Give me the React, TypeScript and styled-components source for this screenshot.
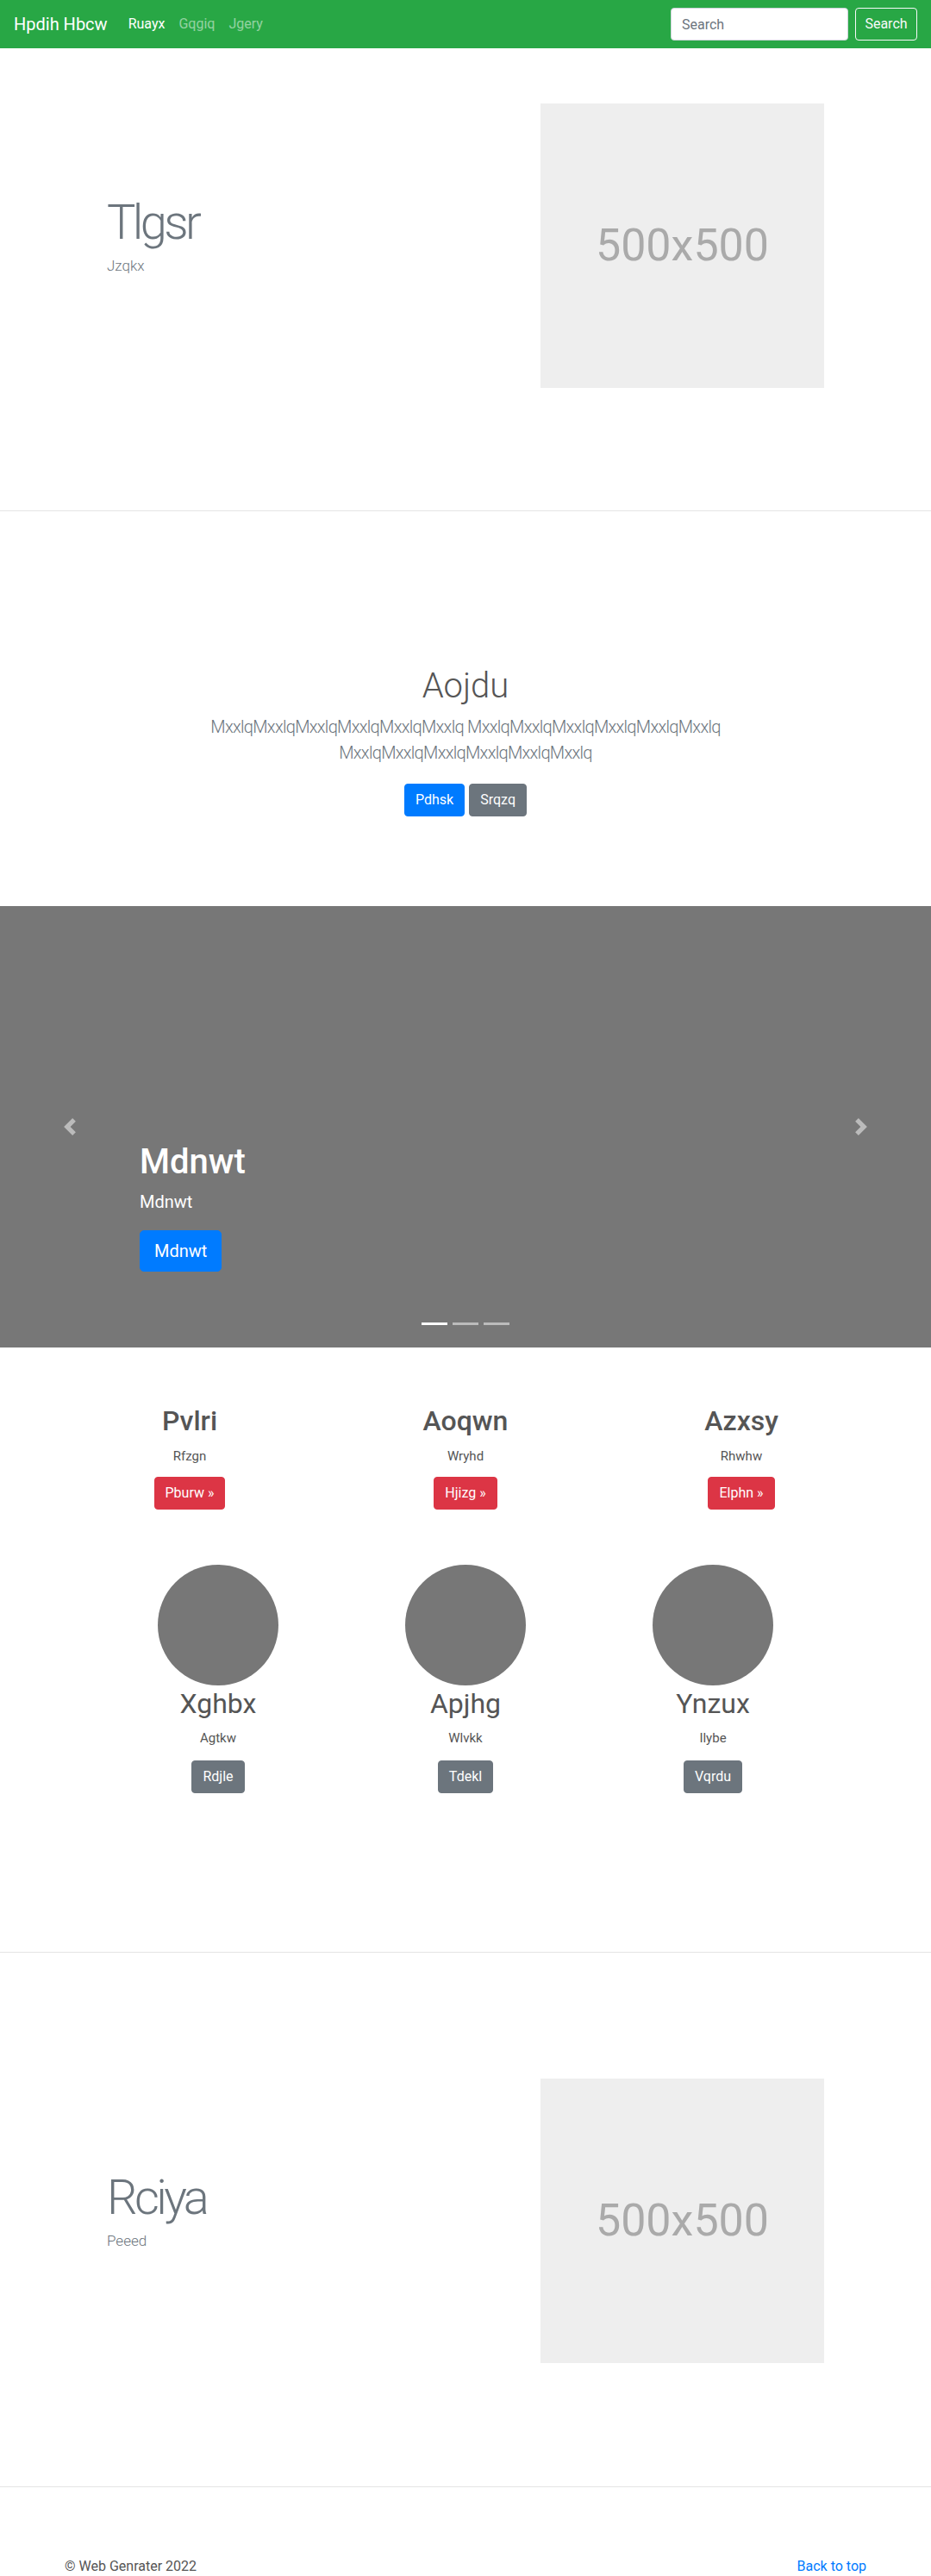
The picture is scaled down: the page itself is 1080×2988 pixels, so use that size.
import React from "react";
import styled, { createGlobalStyle } from "styled-components";

const GlobalStyle = createGlobalStyle`
  html, body { margin: 0; padding: 0; }
  body {
    font-family: Roboto, "Noto Sans", "Liberation Sans", sans-serif;
    font-size: 16px;
    line-height: 1.5;
    color: #212529;
    background: #fff;
  }
  * { box-sizing: border-box; }
`;

/* ---------- Navbar ---------- */
const Navbar = styled.nav`
  height: 56px;
  background: #28a745;
  padding: 8px 16px;
  display: flex;
  align-items: center;
`;
const Brand = styled.a`
  font-size: 20px;
  line-height: 30px;
  color: #fff;
  margin-right: 16px;
  text-decoration: none;
`;
const NavList = styled.div`
  display: flex;
  align-items: center;
`;
const NavLink = styled.a<{ $active?: boolean }>`
  padding: 8px;
  font-size: 16px;
  color: ${(p) => (p.$active ? "#fff" : "rgba(255,255,255,0.5)")};
  text-decoration: none;
`;
const SearchForm = styled.form`
  margin-left: auto;
  display: flex;
  align-items: center;
`;
const SearchInput = styled.input`
  width: 206px;
  height: 38px;
  padding: 6px 12px;
  font-family: inherit;
  font-size: 16px;
  color: #495057;
  border: 1px solid #ced4da;
  border-radius: 4px;
  margin-right: 8px;
  &::placeholder { color: #6c757d; }
`;
const OutlineButton = styled.button`
  width: 72px;
  height: 38px;
  padding: 6px 0;
  font-family: inherit;
  font-size: 16px;
  line-height: 24px;
  text-align: center;
  color: #f8f9fa;
  background: transparent;
  border: 1px solid #f8f9fa;
  border-radius: 4px;
`;

/* ---------- Feature (hero) ---------- */
const FeatureSection = styled.section<{ $pt: number; $pb: number }>`
  padding-top: ${(p) => p.$pt}px;
  padding-bottom: ${(p) => p.$pb}px;
  border-bottom: 1px solid #e5e5e5;
`;
const FeatureInner = styled.div`
  max-width: 960px;
  margin: 0 auto;
  padding: 0 64px;
  display: flex;
  align-items: center;
  justify-content: space-between;
`;
const FeatureText = styled.div`
  display: flex;
  flex-direction: column;
`;
const FeatureTitle = styled.h1`
  margin: 0;
  font-size: 56px;
  line-height: 1.1;
  font-weight: 300;
  letter-spacing: -3.6px;
  color: #6c757d;
`;
const FeatureSub = styled.p`
  margin: 6px 0 20px;
  font-size: 17px;
  line-height: 1.5;
  font-weight: 300;
  color: #6c757d;
`;
const Placeholder = styled.div`
  width: 329px;
  height: 330px;
  background: #eee;
  color: #aaa;
  font-size: 52px;
  display: flex;
  align-items: center;
  justify-content: center;
`;

/* ---------- Jumbotron ---------- */
const Jumbotron = styled.section`
  padding: 179px 15px 104px;
  text-align: center;
`;
const JumboInner = styled.div`
  max-width: 640px;
  margin: 0 auto;
  padding: 0 15px;
`;
const JumboHeading = styled.h1`
  margin: 0 0 8px;
  font-size: 40px;
  line-height: 1.2;
  font-weight: 300;
  color: #555;
`;
const Lead = styled.p`
  margin: 0 0 21px;
  font-size: 20px;
  line-height: 30px;
  font-weight: 300;
  color: #6c757d;
  letter-spacing: -0.7px;
`;
const ButtonRow = styled.div`
  display: flex;
  justify-content: center;
  gap: 5px;
`;
const variants: Record<string, string> = {
  primary: "#007bff",
  secondary: "#6c757d",
  danger: "#dc3545",
};
const Btn = styled.a<{ $variant: "primary" | "secondary" | "danger" }>`
  display: inline-block;
  height: 38px;
  padding: 6px 12px;
  font-size: 16px;
  line-height: 24px;
  color: #fff;
  background: ${(p) => variants[p.$variant]};
  border: 1px solid ${(p) => variants[p.$variant]};
  border-radius: 4px;
  text-decoration: none;
`;

/* ---------- Carousel ---------- */
const Carousel = styled.section`
  position: relative;
  height: 512px;
  background: #777;
  overflow: hidden;
`;
const Control = styled.a<{ $side: "left" | "right" }>`
  position: absolute;
  top: 0;
  bottom: 0;
  ${(p) => p.$side}: 0;
  width: 15%;
  display: flex;
  align-items: center;
  justify-content: center;
  opacity: 0.5;
`;
const Caption = styled.div`
  position: absolute;
  left: 15%;
  right: 15%;
  bottom: 88px;
  color: #fff;
  display: flex;
  flex-direction: column;
  align-items: flex-start;
`;
const CaptionTitle = styled.h1`
  margin: 0 0 7px;
  font-size: 40px;
  line-height: 48px;
  font-weight: 500;
`;
const CaptionText = styled.p`
  margin: 0 0 18px;
  font-size: 20px;
  line-height: 30px;
`;
const BtnLg = styled.a`
  display: inline-block;
  height: 48px;
  padding: 8px 16px;
  font-size: 20px;
  line-height: 30px;
  color: #fff;
  background: #007bff;
  border: 1px solid #007bff;
  border-radius: 5px;
  text-decoration: none;
`;
const Indicators = styled.ol`
  position: absolute;
  left: 15%;
  right: 15%;
  bottom: 26px;
  margin: 0;
  padding: 0;
  list-style: none;
  display: flex;
  justify-content: center;
  gap: 6px;
`;
const Indicator = styled.li<{ $active?: boolean }>`
  width: 30px;
  height: 3px;
  background: #fff;
  opacity: ${(p) => (p.$active ? 1 : 0.5)};
`;

/* ---------- Marketing ---------- */
const Marketing = styled.section`
  padding: 66px 0 184px;
  border-bottom: 1px solid #e5e5e5;
  color: #555;
`;
const MarketingGrid = styled.div<{ $width: number; $mb?: number }>`
  width: ${(p) => p.$width}px;
  margin: 0 auto ${(p) => p.$mb ?? 0}px;
  display: grid;
  grid-template-columns: repeat(3, 1fr);
`;
const MarketingCol = styled.div`
  display: flex;
  flex-direction: column;
  align-items: center;
  text-align: center;
`;
const Circle = styled.div`
  width: 140px;
  height: 140px;
  border-radius: 50%;
  background: #777;
  margin-bottom: 2px;
`;
const MarketingTitle = styled.h2<{ $weight: number }>`
  margin: 0 0 ${(p) => (p.$weight > 400 ? 10 : 8)}px;
  font-size: 32px;
  line-height: 38.4px;
  font-weight: ${(p) => p.$weight};
  color: #555;
`;
const MarketingText = styled.p<{ $mb: number }>`
  margin: 0 0 ${(p) => p.$mb}px;
  font-size: 15px;
  line-height: 24px;
  color: #555;
`;

/* ---------- Footer ---------- */
const Footer = styled.footer`
  padding: 80px 0 16px;
`;
const FooterInner = styled.div`
  max-width: 960px;
  margin: 0 auto;
  padding: 0 15px;
  display: flex;
  justify-content: space-between;
  font-size: 16px;
  line-height: 24px;
  color: #555;
`;
const BackLink = styled.a`
  color: #007bff;
  text-decoration: none;
`;

const Chevron = ({ dir }: { dir: "prev" | "next" }) => (
  <svg width="20" height="20" viewBox="0 0 8 8" fill="#fff">
    {dir === "prev" ? (
      <path d="M5.25 0l-4 4 4 4 1.5-1.5L4.25 4l2.5-2.5L5.25 0z" />
    ) : (
      <path d="M2.75 0l-1.5 1.5L3.75 4l-2.5 2.5L2.75 8l4-4-4-4z" />
    )}
  </svg>
);

const word = "MxxlqMxxlqMxxlqMxxlqMxxlqMxxlq";

const topFeatures = [
  { t: "Pvlri", s: "Rfzgn", b: "Pburw »" },
  { t: "Aoqwn", s: "Wryhd", b: "Hjizg »" },
  { t: "Azxsy", s: "Rhwhw", b: "Elphn »" },
];
const people = [
  { t: "Xghbx", s: "Agtkw", b: "Rdjle" },
  { t: "Apjhg", s: "Wlvkk", b: "Tdekl" },
  { t: "Ynzux", s: "Ilybe", b: "Vqrdu" },
];

export default function App() {
  return (
    <>
      <GlobalStyle />
      <Navbar>
        <Brand href="#">Hpdih Hbcw</Brand>
        <NavList>
          <NavLink $active href="#">Ruayx</NavLink>
          <NavLink href="#">Gqgiq</NavLink>
          <NavLink href="#">Jgery</NavLink>
        </NavList>
        <SearchForm onSubmit={(e) => e.preventDefault()}>
          <SearchInput placeholder="Search" />
          <OutlineButton type="submit">Search</OutlineButton>
        </SearchForm>
      </Navbar>

      <FeatureSection $pt={64} $pb={142}>
        <FeatureInner>
          <FeatureText>
            <FeatureTitle>Tlgsr</FeatureTitle>
            <FeatureSub>Jzqkx</FeatureSub>
          </FeatureText>
          <Placeholder>500x500</Placeholder>
        </FeatureInner>
      </FeatureSection>

      <Jumbotron>
        <JumboInner>
          <JumboHeading>Aojdu</JumboHeading>
          <Lead>
            {word} {word} {word}
          </Lead>
          <ButtonRow>
            <Btn $variant="primary" href="#">Pdhsk</Btn>
            <Btn $variant="secondary" href="#">Srqzq</Btn>
          </ButtonRow>
        </JumboInner>
      </Jumbotron>

      <Carousel>
        <Control $side="left" href="#">
          <Chevron dir="prev" />
        </Control>
        <Control $side="right" href="#">
          <Chevron dir="next" />
        </Control>
        <Caption>
          <CaptionTitle>Mdnwt</CaptionTitle>
          <CaptionText>Mdnwt</CaptionText>
          <BtnLg href="#">Mdnwt</BtnLg>
        </Caption>
        <Indicators>
          <Indicator $active />
          <Indicator />
          <Indicator />
        </Indicators>
      </Carousel>

      <Marketing>
        <MarketingGrid $width={960} $mb={64}>
          {topFeatures.map((f) => (
            <MarketingCol key={f.t}>
              <MarketingTitle $weight={500}>{f.t}</MarketingTitle>
              <MarketingText $mb={12}>{f.s}</MarketingText>
              <Btn $variant="danger" href="#">{f.b}</Btn>
            </MarketingCol>
          ))}
        </MarketingGrid>
        <MarketingGrid $width={861}>
          {people.map((f) => (
            <MarketingCol key={f.t}>
              <Circle />
              <MarketingTitle $weight={400}>{f.t}</MarketingTitle>
              <MarketingText $mb={14}>{f.s}</MarketingText>
              <Btn $variant="secondary" href="#">{f.b}</Btn>
            </MarketingCol>
          ))}
        </MarketingGrid>
      </Marketing>

      <FeatureSection $pt={146} $pb={143}>
        <FeatureInner>
          <FeatureText>
            <FeatureTitle>Rciya</FeatureTitle>
            <FeatureSub>Peeed</FeatureSub>
          </FeatureText>
          <Placeholder>500x500</Placeholder>
        </FeatureInner>
      </FeatureSection>

      <Footer>
        <FooterInner>
          <span>© Web Genrater 2022</span>
          <BackLink href="#">Back to top</BackLink>
        </FooterInner>
      </Footer>
    </>
  );
}
